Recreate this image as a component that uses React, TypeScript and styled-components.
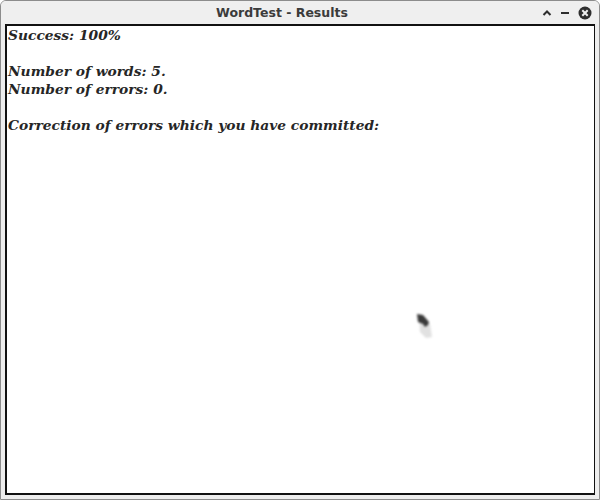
import React from "react";
import styled, { createGlobalStyle } from "styled-components";

const Global = createGlobalStyle`
  html, body { margin: 0; padding: 0; background: #ffffff; }
  #root { width: 600px; height: 500px; }
`;

const Window = styled.div`
  box-sizing: border-box;
  width: 600px;
  height: 500px;
  display: flex;
  flex-direction: column;
  background: #ededed;
  border: 1px solid #8c8c8c;
  border-radius: 6px 6px 0 0;
  overflow: hidden;
  position: relative;
`;

const TitleBar = styled.div`
  height: 23px;
  flex: none;
  display: flex;
  align-items: center;
  justify-content: center;
  position: relative;
  background: #efefef;
`;

const Title = styled.div`
  font-family: "DejaVu Sans", sans-serif;
  font-weight: bold;
  font-size: 12.5px;
  color: #3b3b3b;
  margin-left: -36px;
`;

const Controls = styled.div`
  position: absolute;
  right: 7px;
  top: 5px;
  display: flex;
  align-items: center;
  gap: 8px;
`;

const Body = styled.div`
  flex: 1;
  padding: 0 4px 4px 4px;
  display: flex;
`;

const Content = styled.div`
  flex: 1;
  box-sizing: border-box;
  background: #ffffff;
  border: 2px solid #111111;
  border-right-width: 1px;
  padding: 0 0 0 1px;
  position: relative;
`;

const Line = styled.div`
  font-family: "DejaVu Serif", serif;
  font-weight: bold;
  font-style: italic;
  font-size: 13.8px;
  line-height: 18px;
  color: #262626;
  height: 18px;
  white-space: pre;
`;

const Cursor = styled.svg`
  position: absolute;
  left: 405px;
  top: 284px;
  filter: blur(0.9px);
`;

export default function App() {
  const lines = [
    "Success: 100%",
    "",
    "Number of words: 5.",
    "Number of errors: 0.",
    "",
    "Correction of errors which you have committed:",
  ];
  return (
    <>
      <Global />
      <Window>
        <TitleBar>
          <Title>WordTest - Results</Title>
          <Controls>
            <svg width="10" height="8" viewBox="0 0 10 8">
              <path d="M1.5 6 L5 2.5 L8.5 6" fill="none" stroke="#2e2e2e" strokeWidth="2" />
            </svg>
            <svg width="10" height="8" viewBox="0 0 10 8">
              <rect x="1" y="3" width="8" height="2" fill="#2e2e2e" />
            </svg>
            <svg width="14" height="14" viewBox="0 0 14 14">
              <circle cx="7" cy="7" r="6.5" fill="#2e2e2e" />
              <path d="M4.3 4.3 L9.7 9.7 M9.7 4.3 L4.3 9.7" stroke="#efefef" strokeWidth="2" />
            </svg>
          </Controls>
        </TitleBar>
        <Body>
          <Content>
            {lines.map((l, i) => (
              <Line key={i}>{l}</Line>
            ))}
            <Cursor width="26" height="30" viewBox="0 0 26 30">
              <path d="M7 7 L18 14 L20 27 L14 28 L8 22 Z" fill="#c8c8c8" opacity="0.55" />
              <path d="M5 4 L11 5 L17 12 L16 15 L13 17 L11 14 L6 12 Z" fill="#3a3a3a" />
            </Cursor>
          </Content>
        </Body>
      </Window>
    </>
  );
}
